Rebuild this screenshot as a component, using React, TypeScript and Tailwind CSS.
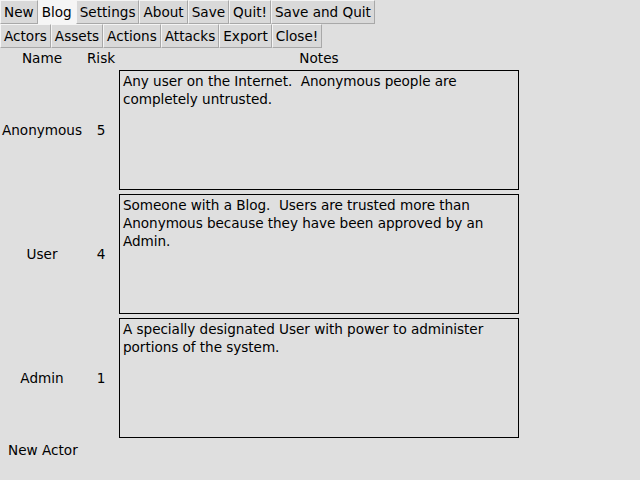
import React from "react";

const topButtons = ["New", "Blog", "Settings", "About", "Save", "Quit!", "Save and Quit"];
const tabButtons = ["Actors", "Assets", "Actions", "Attacks", "Export", "Close!"];

const actors = [
  {
    name: "Anonymous",
    risk: 5,
    notes: "Any user on the Internet.  Anonymous people are completely untrusted.",
  },
  {
    name: "User",
    risk: 4,
    notes:
      "Someone with a Blog.  Users are trusted more than Anonymous because they have been approved by an Admin.",
  },
  {
    name: "Admin",
    risk: 1,
    notes: "A specially designated User with power to administer portions of the system.",
  },
];

function TkButton({ label, active }: { label: string; active?: boolean }) {
  return (
    <button
      className={`h-[24px] px-[3px] pt-[1px] border leading-none ${
        active
          ? "bg-[#f5f5f5] border-[#f5f5f5]"
          : "bg-[#d9d9d9] border-t-[#f4f4f4] border-l-[#f4f4f4] border-r-[#a8a8a8] border-b-[#a8a8a8]"
      }`}
    >
      {label}
    </button>
  );
}

export default function App() {
  return (
    <div
      className="w-[640px] h-[480px] bg-[#dfdfdf] text-[13.6px] text-black overflow-hidden"
      style={{ fontFamily: '"DejaVu Sans", sans-serif' }}
    >
      {/* menu rows */}
      <div className="flex">
        {topButtons.map((b) => (
          <TkButton key={b} label={b} active={b === "Blog"} />
        ))}
      </div>
      <div className="flex">
        {tabButtons.map((b) => (
          <TkButton key={b} label={b} />
        ))}
      </div>

      {/* table */}
      <div className="grid grid-cols-[84px_32px_406px]">
        <div className="text-center h-[20px] leading-[20px]">Name</div>
        <div className="text-center h-[20px] leading-[20px] pl-[2px]">Risk</div>
        <div className="text-center h-[20px] leading-[20px]">Notes</div>
        {actors.map((a) => (
          <React.Fragment key={a.name}>
            <div className="flex items-center justify-center h-[124px]">{a.name}</div>
            <div className="flex items-center justify-center h-[124px] pl-[2px]">{a.risk}</div>
            <div className="h-[124px] pl-[3px] pt-[2px]">
              <div className="w-[400px] h-[120px] border border-black px-[3px] pt-[1px] leading-[18px] whitespace-pre-wrap tracking-[-0.05px]">
                {a.notes}
              </div>
            </div>
          </React.Fragment>
        ))}
      </div>

      <div className="pl-[8px] h-[20px] leading-[20px]">New Actor</div>
    </div>
  );
}
